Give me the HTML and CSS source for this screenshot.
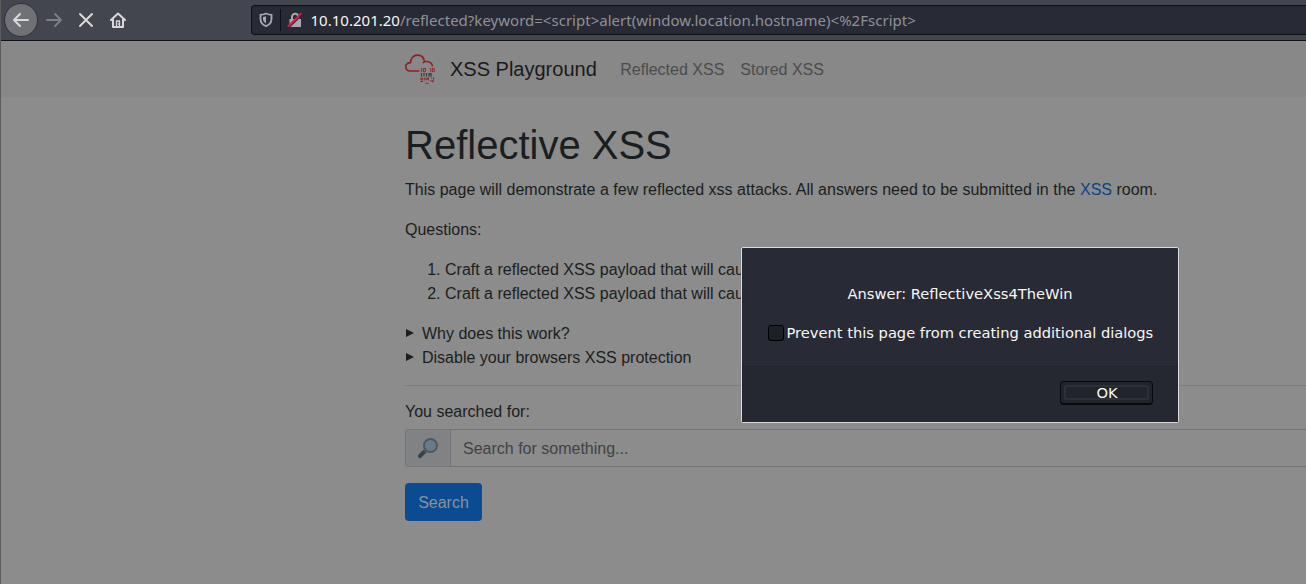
FILE: index.html
```html
<!DOCTYPE html>
<html lang="en">
<head>
<meta charset="utf-8">
<title>XSS Playground</title>
<link rel="stylesheet" href="styles.css">
</head>
<body>
<header class="toolbar">
  <div class="back"><svg width="18" height="18" viewBox="0 0 18 18"><path d="M16 9H2.5M8 3L2 9l6 6"/></svg></div>
  <svg class="tool forward" width="18" height="18" viewBox="0 0 18 18"><path d="M2 9h13.5M10 3l6 6-6 6"/></svg>
  <svg class="tool stop" width="18" height="18" viewBox="0 0 18 18"><path d="M3 3l12 12M15 3L3 15"/></svg>
  <svg class="tool home" width="18" height="18" viewBox="0 0 18 18"><path d="M2 9l7-6.5L16 9M4 8.500V16h10V8.500"/><path class="door" d="M7.500 15.500V10h3v5.500M9.300 13v.1"/></svg>
  <div class="urlbar">
    <svg class="shield" width="14" height="16" viewBox="0 0 14 16"><path class="outline" d="M7 1.500C5 2.300 3 2.800 1.500 2.800V7c0 3.500 2 5.800 5.500 7.200 3.500-1.400 5.500-3.700 5.500-7.200V2.800C11 2.800 9 2.300 7 1.500z"/><path class="half" d="M7 4.200v7.300C5 10.400 4 9 4 7V5z"/></svg>
    <span class="divider"></span>
    <svg class="lock" width="16" height="16" viewBox="0 0 16 16"><path class="shackle" d="M5 8V5a3.200 3.200 0 0 1 6.400 0v3"/><path class="body" d="M2.500 7h11.500v8H2.500z"/><path class="gap" d="M2 15.500L15.500 2.500"/><path class="slash" d="M1 14.500L14.500 1.200"/></svg>
    <span class="url"><b>10.10.201.20</b>/reflected?keyword=&lt;script&gt;alert(window.location.hostname)&lt;%2Fscript&gt;</span>
  </div>
</header>
<nav class="navbar">
  <svg class="logo" width="30" height="30" viewBox="0 0 30 30">
    <path class="cloud" d="M14.500 17H5.300C2.500 17 .8 15.300.8 12.800c0-2.500 1.900-4.300 5.200-4.200M5.500 9C5.500 4 8.500 1.100 12.500 1.100c3.700 0 6.400 2.400 7 6.400M17.800 8.800c1.300-1.200 3-1.500 4.600-1.300 2.900.400 4.800 2.300 5.100 5"/>
    <g class="red"><path d="M15.700 14.500h1v3.500M18.500 14.500h2v3.200h-2zM24.800 14.500h1v3.500M27.500 14.500h1.800v3.200h-1.800z"/><path d="M15.800 24h1.800v1.800h-1.800zM19.300 23.500v3M21 24h1.300v1.800H21zM23.500 23.500v3M25 27h4M20.500 29.300h3M27.800 26v2.500"/></g>
    <g class="dark"><path d="M16.500 19v3.500M19 19v3.500M21.500 19v3.500M24 19.500h2v2.500h-2zM26 24h1M28.500 23.500v2M15.500 27.500H18"/></g>
  </svg>
  <span class="brand">XSS Playground</span>
  <span class="link">Reflected XSS</span>
  <span class="link">Stored XSS</span>
</nav>
<main class="content">
  <h1>Reflective XSS</h1>
  <p class="intro">This page will demonstrate a few reflected xss attacks. All answers need to be submitted in the <a>XSS</a> room.</p>
  <p>Questions:</p>
  <ol>
    <li>Craft a reflected XSS payload that will cause</li>
    <li>Craft a reflected XSS payload that will cause</li>
  </ol>
  <div class="summary"><span class="triangle"></span>Why does this work?</div>
  <div class="summary"><span class="triangle"></span>Disable your browsers XSS protection</div>
  <hr>
  <div class="searched">You searched for:</div>
  <div class="group">
    <div class="prefix"><svg width="22" height="22" viewBox="0 0 22 22"><path class="handle" d="M3 19l4.500-4.500"/><path class="neck" d="M7 15l3-3"/><circle cx="13.500" cy="8.500" r="6.500"/></svg></div>
    <div class="input">Search for something...</div>
  </div>
  <div class="search-btn">Search</div>
</main>
<section class="dialog">
  <div class="message">
    <div class="answer">Answer: ReflectiveXss4TheWin</div>
    <div class="prevent"><span class="checkbox"></span><span>Prevent this page from creating additional dialogs</span></div>
  </div>
  <div class="actions"><div class="ok"><span>OK</span></div></div>
</section>
</body>
</html>
```
FILE: styles.css
```css
* { box-sizing: border-box; }
body {
  margin: 0;
  width: 1306px;
  height: 584px;
  overflow: hidden;
  position: relative;
  background: #8c8c8c;
  color: #1b1e20;
  font: 16px/24px "Liberation Sans", Arial, sans-serif;
  border-left: 1px solid #5b5b5b;
}
svg { display: block; fill: none; flex: none; }
.toolbar {
  height: 41px;
  background: #43464e;
  border-bottom: 1px solid #111217;
  display: flex;
  align-items: center;
  padding-left: 3px;
}
.back {
  width: 34px;
  height: 34px;
  border-radius: 50%;
  background: #707176;
  border: 1px solid #303238;
  display: flex;
  align-items: center;
  justify-content: center;
  flex: none;
}
.back svg, .tool { stroke: #d8d9d8; stroke-width: 2; stroke-linecap: round; stroke-linejoin: round; }
.tool.forward { stroke: #7c7e83; margin-left: 7px; }
.tool.stop { margin-left: 14px; }
.tool.home { margin-left: 14px; }
.door { stroke-width: 1.3; }
.urlbar {
  margin-left: 124px;
  flex: 1;
  height: 30px;
  background: #282a36;
  border: 1px solid #0e0f13;
  border-right: 0;
  border-radius: 4px 0 0 4px;
  display: flex;
  align-items: center;
  white-space: nowrap;
}
.shield { margin-left: 7px; }
.outline { stroke: #a7a9ad; stroke-width: 1.8; }
.half { fill: #a7a9ad; }
.divider { width: 1px; height: 22px; background: #0e0f13; margin: 0 6px 0 7px; }
.shackle { stroke: #a7a9ad; stroke-width: 2; }
.body { fill: #a7a9ad; }
.gap { stroke: #282a36; stroke-width: 1.2; }
.slash { stroke: #f20f45; stroke-width: 1.8; }
.url { margin-left: 7.500px; font: 15px/22px "Noto Sans", sans-serif; letter-spacing: 0.015px; color: #909197; }
.url b { font-weight: 400; color: #f8f8f2; }
.navbar {
  height: 56px;
  background: #888;
  display: flex;
  align-items: center;
  padding-left: 404px;
}
.cloud { stroke: #8e1f25; stroke-width: 1.6; }
.red { stroke: #8e2c31; stroke-width: 1; }
.dark { stroke: #383a3c; stroke-width: 1.2; }
.brand { margin: 0 15.500px 0 15px; font-size: 20px; line-height: 30px; color: #1a1a1a; }
.link { padding: 2px 8px 0; color: #4c4c4c; }
.content { padding: 24px 0 0 404px; }
h1 { margin: 0 0 9px; font-size: 40px; line-height: 48px; font-weight: 400; }
p { margin: 0 0 16px; }
.intro { word-spacing: 0.05px; }
a { color: #084486; }
ol { margin: 0 0 16px; padding-left: 40px; }
.summary { display: flex; align-items: center; }
.triangle { border-left: 8px solid #1b1e20; border-top: 4.5px solid transparent; border-bottom: 4.5px solid transparent; margin: 0 8px 2px 1px; }
hr { margin: 15px 0 14px; border: 0; height: 1px; background: #7e7e7e; }
.searched { margin-bottom: 5px; }
.group { display: flex; height: 38px; border: 1px solid #72767a; border-right: 0; border-radius: 4px 0 0 4px; overflow: hidden; }
.prefix { width: 45px; border-right: 1px solid #72767a; background: #808284; display: flex; align-items: center; justify-content: center; }
.handle { stroke: #3b4247; stroke-width: 4; stroke-linecap: round; }
.neck { stroke: #4f585e; stroke-width: 2.5; }
.prefix circle { fill: #667b8b; stroke: #4f585e; stroke-width: 2; }
.input { padding: 7px 12px 5px; color: #3f4346; }
.search-btn { margin-top: 16px; width: 77px; height: 38px; border-radius: 4px; background: #0a4b91; color: #8c9299; text-align: center; line-height: 40px; }
.dialog {
  position: absolute;
  left: 740px;
  top: 247px;
  width: 438px;
  height: 176px;
  border: 1px solid #dadada;
  border-radius: 2px;
  background: #282a36;
  color: #f8f8f2;
  font: 14.67px/20px "DejaVu Sans", sans-serif;
  display: flex;
  flex-direction: column;
}
.message { height: 118px; padding-top: 36px; }
.answer { text-align: center; }
.prevent { display: flex; align-items: center; padding-left: 26px; margin-top: 19px; white-space: nowrap; }
.checkbox { width: 16px; height: 16px; border: 1px solid #000; border-radius: 3px; background: #1d2027; margin-right: 2.500px; flex: none; }
.actions { flex: 1; background: #262831; border-top: 1px solid #22242c; display: flex; justify-content: flex-end; padding: 14px 25px 0 0; }
.ok { width: 93px; height: 24px; border: 1px solid #08090c; border-bottom-width: 2px; border-radius: 4px; background: #22242c; padding: 3px; }
.ok span { display: block; height: 100%; border: 2px solid #2e3038; border-radius: 2px; line-height: 12px; text-align: center; padding-left: 1px; }
```
